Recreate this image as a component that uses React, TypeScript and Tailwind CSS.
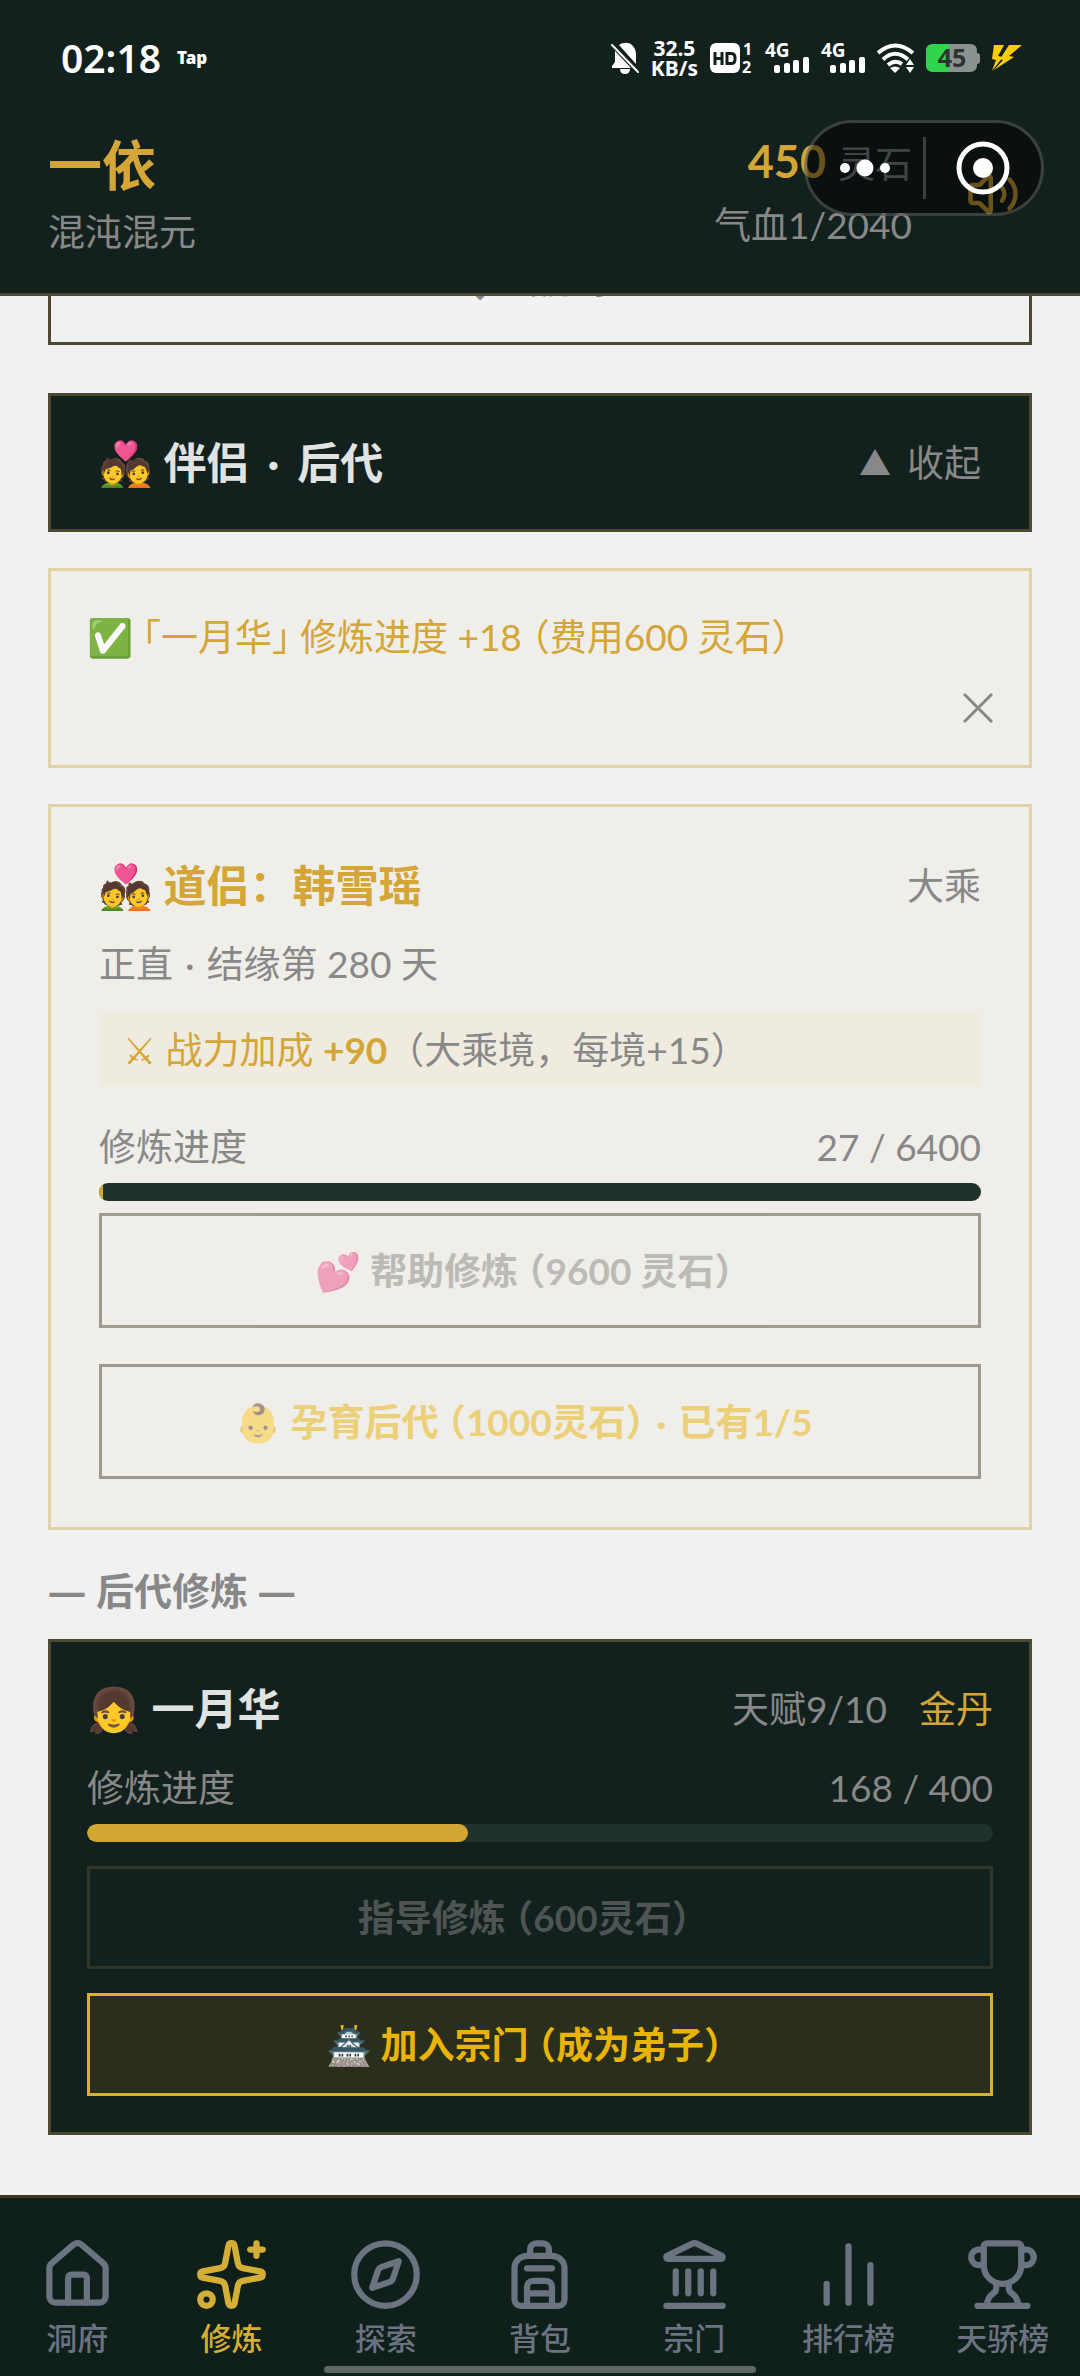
import React from 'react';
import {
  Backpack,
  ChartNoAxesColumn,
  Compass,
  House,
  Landmark,
  Sparkles,
  Trophy,
  Volume2,
  type LucideIcon,
} from 'lucide-react';

const NAV_ITEMS: { label: string; icon: LucideIcon; active?: boolean }[] = [
  { label: '洞府', icon: House },
  { label: '修炼', icon: Sparkles, active: true },
  { label: '探索', icon: Compass },
  { label: '背包', icon: Backpack },
  { label: '宗门', icon: Landmark },
  { label: '排行榜', icon: ChartNoAxesColumn },
  { label: '天骄榜', icon: Trophy },
];

const Dot = () => <span className="mx-3">·</span>;

const Signal = () => (
  <svg width="44" height="32" viewBox="0 0 44 32" fill="#fff" className="overflow-visible">
    <text x="0" y="15" fontSize="19" fontWeight="700" fontFamily="Noto Sans">4G</text>
    <rect x="9" y="23" width="6" height="8" rx="2" />
    <rect x="19" y="21" width="6" height="10" rx="2" />
    <rect x="28" y="18" width="6" height="13" rx="2" />
    <rect x="38" y="15" width="6" height="16" rx="2" />
  </svg>
);

const StatusBar = () => (
  <div className="flex h-[116px] items-center justify-between pl-[61px] pr-[58px] font-['Noto_Sans',sans-serif] text-white">
    <div className="flex items-center gap-4">
      <span className="text-[39px] font-semibold">02:18</span>
      <span className="text-[17px] font-black">Tap</span>
    </div>
    <div className="flex items-center gap-3">
      {/* Muted bell */}
      <svg width="28" height="32" viewBox="0 0 28 32" fill="#fff">
        <path d="M8 3C12 0 18 0 21 3c3 3 4 6 4 9v10zM4 9l16 17H1v-2l3-4zM9 27h10c0 3-2 5-5 5s-5-2-5-5z" />
        <path d="M1 3l26 27" stroke="#fff" strokeWidth="2" strokeLinecap="round" />
      </svg>
      <div className="flex flex-col items-center text-[21px] leading-[20px] font-bold">
        <span>32.5</span>
        <span>KB/s</span>
      </div>
      <svg width="43" height="32" viewBox="0 0 43 32" fill="#fff" className="overflow-visible">
        <rect x="0" y="1" width="30" height="30" rx="6" />
        <g fill="none" stroke="#12201d" strokeWidth="3">
          <path d="M5 10v13M12 10v13M5 16.500h7M17 11.500h4q4 0 4 4v2q0 4-4 4h-4z" />
        </g>
        <text x="33" y="13" fontSize="16" fontWeight="700" fontFamily="Noto Sans">1</text>
        <text x="32" y="31" fontSize="16" fontWeight="700" fontFamily="Noto Sans">2</text>
      </svg>
      <Signal />
      <Signal />
      <svg width="37" height="32" viewBox="0 0 37 32" fill="none" stroke="#fff" strokeWidth="4">
        <path d="M1 11Q18 -4 36 11M6 17.500Q18 6 31 17.500M11 23Q18 17 25 22" />
        <path d="M13 26q5-3 10 0l-5 5z" fill="#fff" stroke="none" />
        <path d="M29 23l4-6 4 6zM29 25h8l-4 6z" fill="#fff" stroke="none" />
      </svg>
      <svg width="54" height="28" viewBox="0 0 54 28" className="overflow-visible">
        <path d="M8 0h36q7 0 7 7v2q3 0 3 3v5q0 3-3 3v1q0 7-7 7H8q-8 0-8-7V7q0-7 8-7z" fill="#8a9290" />
        <path d="M8 0h15v28H8q-8 0-8-7V7q0-7 8-7z" fill="#2fd64b" />
        <text x="26" y="23" textAnchor="middle" fontSize="25" fontWeight="700" fontFamily="Noto Sans" fill="#2c3331">45</text>
      </svg>
      <svg width="30" height="26" viewBox="0 0 30 26" fill="#ffcc0a">
        <path d="M2 0h10L6 11l5 1L0 26l4-11-4-1zM17 0h13L17 11l5 1L2 25l9-10-3-1z" />
      </svg>
    </div>
  </div>
);

/* Floating mini-program menu over the header */
const Capsule = () => (
  <div className="absolute top-[120px] right-9 flex h-24 w-60 items-center rounded-full border-[3px] border-white/20 bg-black/50">
    <button type="button" aria-label="更多" className="flex flex-1 justify-center">
      <svg width="52" height="18" viewBox="0 0 52 18" fill="#fff">
        <circle cx="6" cy="9" r="5" />
        <circle cx="26" cy="9" r="8.500" />
        <circle cx="46" cy="9" r="5" />
      </svg>
    </button>
    <span className="h-[62px] w-[3px] bg-white/20" />
    <button type="button" aria-label="关闭" className="flex flex-1 justify-center">
      <svg width="54" height="54" viewBox="0 0 54 54">
        <circle cx="27" cy="27" r="24" fill="none" stroke="#fff" strokeWidth="5" />
        <circle cx="27" cy="27" r="10" fill="#fff" />
      </svg>
    </button>
  </div>
);

const Header = () => (
  <header className="relative border-b-[3px] border-[#4e4935] bg-[#13211e]">
    <StatusBar />
    <div className="flex items-center justify-between pt-3 pr-12 pb-[34px] pl-12">
      <div>
        <h1 className="text-[54px] leading-[76px] font-bold text-[#d4a537]">一依</h1>
        <p className="leading-[55px] text-[#888888]">混沌混元</p>
      </div>
      <div className="flex items-center gap-[42px] self-stretch">
        <div className="self-start text-right">
          <p className="leading-[66px] text-[#888888]">
            <span className="text-[45px] font-bold text-[#d4a537]">450</span>
            <span className="ml-3">灵石</span>
          </p>
          <p className="leading-[55px] text-[#888888]">气血1/2040</p>
        </div>
        <button type="button" aria-label="声音" className="px-3 text-[#d4a537]">
          <Volume2 size={54} />
        </button>
      </div>
    </div>
    <Capsule />
  </header>
);

const Progress = ({ value, max }: { value: number; max: number }) => (
  <>
    <div className="flex justify-between leading-[55px] text-[#888888]">
      <span>修炼进度</span>
      <span>{value} / {max}</span>
    </div>
    <div className="mt-[9px] h-[18px] overflow-hidden rounded-full bg-[#21312c]">
      <div className="h-full rounded-full bg-[#d4a632]" style={{ width: `${(value / max) * 100}%` }} />
    </div>
  </>
);

const PartnerCard = () => (
  <section className="mt-9 border-[3px] border-[#e0d3a9] bg-[#efeee8] p-12">
    <div className="flex items-center justify-between leading-[62px]">
      <h3 className="text-[43px] font-bold text-[#d4a537]">💑 道侣：韩雪瑶</h3>
      <span className="text-[#888888]">大乘</span>
    </div>
    <p className="mt-[19px] leading-[55px] text-[#888888]">正直<Dot />结缘第 280 天</p>
    <p className="mt-[22px] bg-[#efebdf] px-6 py-[9px] leading-[55px] text-[#888888]">
      <span className="text-[#d4a537]">⚔ 战力加成 <b>+90</b></span>（大乘境，每境+15）
    </p>
    <div className="mt-[33px]">
      <Progress value={27} max={6400} />
    </div>
    <button
      type="button"
      disabled
      className="mt-3 block w-full border-[3px] border-[#4e4935] py-[27px] pr-8 leading-[55px] font-bold text-[#888888] opacity-50 [font-feature-settings:'halt']"
    >
      💕 帮助修炼 （9600 灵石）
    </button>
    <button
      type="button"
      disabled
      className="mt-9 block w-full border-[3px] border-[#4e4935] py-[27px] pr-8 leading-[55px] font-bold text-[#eab308] opacity-50 [font-feature-settings:'halt']"
    >
      👶 孕育后代 （1000灵石）<Dot />已有1/5
    </button>
  </section>
);

const ChildCard = () => (
  <section className="border-[3px] border-[#4e4935] bg-[#13211e] p-9">
    <div className="flex items-center justify-between leading-[62px]">
      <h3 className="text-[43px] font-bold text-[#e0e3e2]">👧 一月华</h3>
      <div className="flex gap-8">
        <span className="text-[#888888]">天赋9/10</span>
        <span className="text-[#d4a537]">金丹</span>
      </div>
    </div>
    <div className="mt-5">
      <Progress value={168} max={400} />
    </div>
    <button
      type="button"
      disabled
      className="mt-6 block w-full border-[3px] border-[#4e4935] py-[21px] pr-8 leading-[55px] font-bold text-[#888888] opacity-50 [font-feature-settings:'halt']"
    >
      指导修炼 （600灵石）
    </button>
    <button
      type="button"
      className="mt-6 block w-full border-[3px] border-[#d9b033] bg-[#292f1c] py-[21px] pr-8 leading-[55px] font-bold text-[#eab308] [font-feature-settings:'halt']"
    >
      🏯 加入宗门 （成为弟子）
    </button>
  </section>
);

const BottomNav = () => (
  <nav className="relative grid grid-cols-7 border-t-[3px] border-[#3a3620] bg-[#0f1f1a] pt-[39px] pb-[18px]">
    {NAV_ITEMS.map(({ label, icon: Icon, active }) => (
      <a
        key={label}
        href="#"
        className={`flex flex-col items-center gap-[6px] text-[31px] leading-10 font-medium ${active ? 'text-[#d4af37]' : 'text-[#6b7280]'}`}
      >
        <Icon size={75} />
        <span>{label}</span>
      </a>
    ))}
    <span className="absolute bottom-[3px] left-[30%] h-[7px] w-2/5 rounded-full bg-[#5d6864]" />
  </nav>
);

const App = () => {
  return (
    <div className="flex min-h-screen flex-col bg-[#f1f1f1] font-[Lato,'Noto_Sans_CJK_SC',sans-serif] text-[37px]">
      <Header />
      <main className="flex-1 px-12 pb-[60px]">
        {/* Scrolled under the header, only its lower edge shows */}
        <button
          type="button"
          className="flex h-[49px] w-full justify-center overflow-hidden border-x-[3px] border-b-[3px] border-[#4e4935] text-[#888888]"
        >
          <span className="-mt-[44px] leading-[55px] font-bold">↓ 去历练</span>
        </button>

        <button
          type="button"
          className="mt-12 flex w-full items-center justify-between border-[3px] border-[#4e4935] bg-[#13211e] px-12 py-9 leading-[61px]"
        >
          <span className="text-[43px] font-bold text-[#e0e3e2]">💑 伴侣<span className="mx-[18px]">·</span>后代</span>
          <span className="flex items-center gap-4 text-[#888888]">
            <span className="text-[32px]">▲</span>收起
          </span>
        </button>

        <div className="mt-9 flex flex-col gap-5 border-[3px] border-[#e0d3a9] bg-[#efeee8] p-9">
          <p className="leading-[60px] text-[#d4a537] [font-feature-settings:'halt']">
            ✅ 「一月华」 修炼进度 +18 （费用600 灵石）
          </p>
          <button type="button" aria-label="关闭提示" className="flex h-[42px] items-center self-end">
            <svg width="30" height="30" viewBox="0 0 30 30" stroke="#888888" strokeWidth="3">
              <path d="M1 1l28 28M29 1L1 29" />
            </svg>
          </button>
        </div>

        <PartnerCard />

        <h2 className="mt-[33px] mb-[21px] font-['Noto_Sans','Noto_Sans_CJK_SC',sans-serif] text-[38px] leading-[55px] font-bold text-[#888888]">
          — 后代修炼 —
        </h2>
        <ChildCard />
      </main>
      <BottomNav />
    </div>
  );
};

export default App;
